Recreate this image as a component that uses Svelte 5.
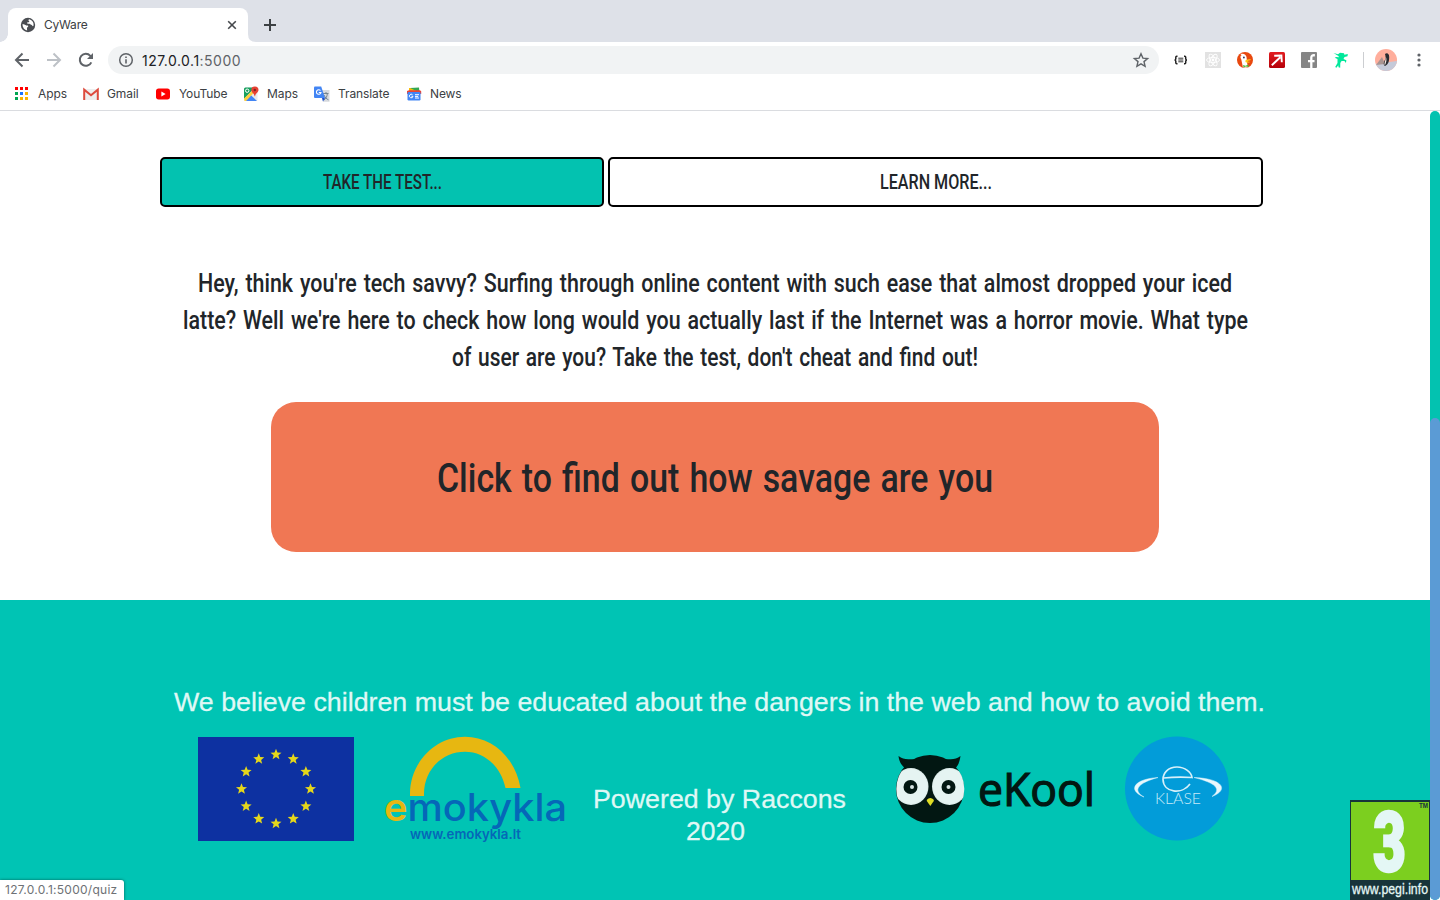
<script>
  const starAngles = Array.from({ length: 12 }, (_, i) => (i * Math.PI) / 6);
  const star = Array.from({ length: 10 }, (_, i) => {
    const r = i % 2 ? 2.5 : 5.8;
    const a = (i * Math.PI) / 5 - Math.PI / 2;
    return `${(r * Math.cos(a)).toFixed(2)},${(r * Math.sin(a)).toFixed(2)}`;
  }).join(' ');
  const appDots = ['#f00', '#f00', '#f00', '#00a651', '#1a73ff', '#fbb400', '#00a651', '#fbb400', '#fbb400'];
  const intro = [
    { t: "Hey, think you're tech savvy? Surfing through online content with such ease that almost dropped your iced", w: 1034 },
    { t: "latte? Well we're here to check how long would you actually last if the Internet was a horror movie. What type", w: 1065 },
    { t: "of user are you? Take the test, don't cheat and find out!", w: 526 }
  ];
</script>

{#snippet fitted(text, width, height, baseline, cls)}
  <svg class={cls} {width} {height}><text x="0" y={baseline} textLength={width} lengthAdjust="spacingAndGlyphs">{text}</text></svg>
{/snippet}

<div class="window">
  <div class="tabs">
    <div class="tab">
      <svg width="16" height="16" viewBox="0 0 16 16"><circle cx="8" cy="8" r="7.2" fill="#4a4d52"/><path d="M2.4 7.2c1.6-.2 2.9.4 3.8 1.4h1.6c.7.5.5 1.4-.3 1.6-.7.2-.6 1.5-.3 3.2C4.500 13 2.500 10.600 2.400 7.200zM9.300 2.300C8 3 8.200 3.600 9 3.900c.6.3.2 1.300-.8 1.300-.9 0-1.600.7-.8 1.300.7.5 1.900-.2 2.600.6.7.8 1.700.7 2.200 1.500.3.5.5.7 1.200.5C14.300 5.800 12.300 3.100 9.300 2.300z" fill="#fff"/></svg>
      <span>CyWare</span>
      <svg class="close" width="10" height="10" viewBox="0 0 10 10"><path d="M1.200 1.200l7.600 7.600M8.800 1.200L1.200 8.800" stroke="#45484c" stroke-width="1.600"/></svg>
    </div>
    <svg class="foot" width="8" height="8"><path d="M0 0Q0 8 8 8H0z" fill="#fff"/></svg>
    <svg class="plus" width="14" height="14"><path d="M7 1v12M1 7h12" stroke="#3c4043" stroke-width="2"/></svg>
  </div>

  <div class="toolbar">
    <div class="nav">
      <svg width="16" height="16"><path d="M15 8H2M8.500 1.500L2 8l6.500 6.500" stroke="#5f6368" stroke-width="2" fill="none"/></svg>
      <svg width="16" height="16"><path d="M1 8h13M7.500 1.500L14 8l-6.500 6.500" stroke="#bdc1c6" stroke-width="2" fill="none"/></svg>
      <svg width="16" height="16"><path d="M13.300 10.300A6 6 0 1 1 12.300 3.800L14 5.500" stroke="#5f6368" stroke-width="2" fill="none"/><path d="M15 1v6H9z" fill="#5f6368"/></svg>
    </div>
    <div class="address">
      <svg width="16" height="16"><circle cx="8" cy="8" r="6.300" stroke="#5f6368" stroke-width="1.500" fill="none"/><path d="M8 7.200v4.200M8 4.500v1.500" stroke="#5f6368" stroke-width="1.600"/></svg>
      <span class="url">127.0.0.1<i>:5000</i></span>
      <svg class="fav" width="16" height="16"><path d="M8 1.700l1.900 4.400 4.700.4-3.600 3.100 1.100 4.700L8 11.800l-4.100 2.500L5 9.600 1.400 6.500l4.700-.4z" stroke="#5f6368" stroke-width="1.400" fill="none"/></svg>
    </div>
    <div class="ext">
      <svg width="16" height="16"><path d="M4.500 4.200h-.8q-.9 0-.9 1v1.500q0 1.300-1.300 1.300 1.300 0 1.300 1.300v1.500q0 1 .9 1h.8M11 4.200h.8q.9 0 .9 1v1.500q0 1.300 1.300 1.300-1.300 0-1.300 1.300v1.500q0 1-.9 1H11" stroke="#222" stroke-width="1.500" fill="none"/><path d="M5.300 6.200h5M5.300 8h5M5.300 9.800h5" stroke="#333" stroke-width="1"/></svg>
      <svg width="16" height="16"><path d="M0 0h16v16H0z" fill="#e2e2e2"/><g fill="none" stroke="#fff" stroke-width=".9"><ellipse cx="8" cy="8" rx="6.500" ry="2.600"/><ellipse cx="8" cy="8" rx="6.500" ry="2.600" transform="rotate(60 8 8)"/><ellipse cx="8" cy="8" rx="6.500" ry="2.600" transform="rotate(120 8 8)"/></g><circle cx="8" cy="8" r="1.400" fill="#fff"/></svg>
      <svg width="16" height="16"><circle cx="8" cy="8" r="8" fill="#e8480f"/><path d="M3.500 2.200C6 1 9.400 2.500 9.600 5.600l.3 4.200 1 5.400c-2 .7-3.500.5-5 0L4.300 7.500C3 5 3.200 3.700 4.700 3.200z" fill="#fff"/><circle cx="6.900" cy="5.500" r=".9" fill="#335"/><path d="M8.500 8.200c2-.9 4.200-1 5.500-.7-.7 1.100-2.800 1.100-3.700 1.700.8.600 2.400.4 3 .8-1.300 1-3.600.9-4.900.1z" fill="#ffcc17"/><path d="M6 13l2.500.7 2.800-1.200.4 2.500-2.900-.4L6.500 15.500z" fill="#55bd36"/></svg>
      <svg width="16" height="16"><defs><linearGradient id="red" x2="0" y2="1"><stop stop-color="#e21d20"/><stop offset="1" stop-color="#b50008"/></linearGradient></defs><rect width="16" height="16" rx="1.500" fill="url(#red)"/><path d="M2.800 13.200l8.500-8M5.200 3.800l7.200-.3.4 6.800" fill="none" stroke="#fff" stroke-width="1.900"/></svg>
      <svg width="16" height="16"><rect width="16" height="16" rx="1" fill="#858585"/><path d="M10.300 16V9.700M7 9.100h6.500M10.300 10V5.800c0-2 1-2.800 3.600-2.500" stroke="#fff" stroke-width="2.300" fill="none"/></svg>
      <svg width="16" height="16"><path d="M.5 1l4.500 1.300L7 .8l4 .4.400 1.600 3.400-.7-.3 2.200-3 .7-1 2 2.900 1.300-.5 2.600-1.500-1.800-2.800-.2-1.300 2-.1 4.800-1.700-.4-.2-2-1.900 2.400-1.200-.8 2.300-4L4.500 7 1.700 5.800l1.500-.9 2.800.4L5.400 4z" fill="#00e89b"/></svg>
    </div>
    <div class="divider"></div>
    <svg class="avatar" width="22" height="22"><defs><clipPath id="face"><circle cx="11" cy="11" r="11"/></clipPath></defs><g clip-path="url(#face)"><path d="M0 0h22v22H0z" fill="#ffae9c"/><path d="M0 15l22-3v10H0z" fill="#c5cad9"/><path d="M1 16L7 8l3 7z" fill="#a99491"/><path d="M10 5c2-1.600 4.200-.4 4.200 3 0 4-.7 7.500-4.200 9-2-1-1.200-4 0-6.200.7-1.700.8-3.200 0-5.800z" fill="#292b31"/><path d="M10.700 8c1.500 2 .5 6.300-.9 8.200-1-2 .9-3.900.9-8.200z" fill="#f3e6df"/></g></svg>
    <svg class="menu" width="4" height="16"><circle cx="2" cy="3" r="1.600"/><circle cx="2" cy="8" r="1.600"/><circle cx="2" cy="13" r="1.600"/></svg>
  </div>

  <div class="bookmarks">
    <div style="width:68px"><svg width="16" height="16">{#each appDots as c, i}<rect x={1 + (i % 3) * 5} y={1 + Math.floor(i / 3) * 5} width="3" height="3" fill={c}/>{/each}</svg><span>Apps</span></div>
    <div style="width:71px"><svg width="16" height="16"><path d="M1 3h14v11H1z" fill="#eee"/><path d="M1.200 14V3.700L8 9.200l6.800-5.500V14" fill="none" stroke="#dd4b3e" stroke-width="2"/></svg><span>Gmail</span></div>
    <div style="width:87px"><svg width="16" height="16"><rect x="1" y="2.500" width="14" height="11" rx="2.700" fill="#f00"/><path d="M6.400 5.500v5L10.600 8z" fill="#fff"/></svg><span>YouTube</span></div>
    <div style="width:70px"><svg width="16" height="16"><rect x="1" y="1.500" width="13.500" height="13.500" rx="1.500" fill="#e8eaed"/><path d="M1 3q0-1.500 1.500-1.500H12L1 13z" fill="#18a05e"/><path d="M2.500 15L8 9.300l6 5.700z" fill="#4285f4"/><path d="M1 12.500L12.500 1.500l1.500 2L3 15H1.500z" fill="#ffcf3d"/><circle cx="4.200" cy="4.700" r="1.700" fill="none" stroke="#fff"/><path d="M11.800.5a3.500 3.500 0 0 0-3.500 3.600c0 2.400 2.900 3.300 3.300 6.100h.5c.4-2.800 3.400-3.700 3.400-6.100A3.600 3.600 0 0 0 11.800.5" fill="#e74133"/><circle cx="11.800" cy="4" r="1.200" fill="#7c251f"/></svg><span>Maps</span></div>
    <div style="width:91px"><svg width="16" height="16"><path d="M5 4h10.500v11.800H9z" fill="#d7dade"/><path d="M9 7.500h5.500M12 6v1.500M10 14c2-1.500 3.200-3.500 3.300-6.500M10 9c1 2.500 2.500 4 4.500 4.800" stroke="#758590" fill="none"/><path d="M1 .5h6.200L11 12H1q-1 0-1-1V1.500Q0 .5 1 .5z" fill="#4285f4"/><path d="M8 12h3l-2 3.500z" fill="#1b50ce"/><path d="M6.500 4.500A2.300 2.300 0 1 0 7 6.500H4.800" fill="none" stroke="#fff" stroke-width="1.100"/></svg><span>Translate</span></div>
    <div><svg width="16" height="16"><path d="M3 2h9v6H3z" fill="#fbbc04"/><path d="M4 2l9-.5.500 5z" fill="#34a853"/><path d="M1 5l2-.8h11l1.200 1V8H1z" fill="#ea4335"/><rect x="1.500" y="6" width="13" height="8.500" rx="1.200" fill="#4285f4"/><path d="M6.500 8.700A1.800 1.800 0 1 0 7 10.300H5.500M9 8.700h4M9 10.400h3.200M9 12h4" stroke="#fff" fill="none"/></svg><span>News</span></div>
  </div>

  <main>
    <div class="choices">
      <button class="test">{@render fitted('TAKE THE TEST...', 119, 24, 19, 'label')}</button>
      <button class="learn">{@render fitted('LEARN MORE...', 112, 24, 19, 'label')}</button>
    </div>
    <div class="intro">
      {#each intro as l}{@render fitted(l.t, l.w, 37, 27, 'copy')}{/each}
    </div>
    <button class="cta">{@render fitted('Click to find out how savage are you', 556, 60, 45, 'big')}</button>
  </main>

  <footer>
    {@render fitted('We believe children must be educated about the dangers in the web and how to avoid them.', 1091, 36, 26, 'belief')}
    <div class="partners">
      <svg width="156" height="108"><rect y="2" width="156" height="104" fill="#0d31a1"/>{#each starAngles as a}<polygon points={star} fill="#e5d71b" transform={`translate(${78 + 34.500 * Math.sin(a)} ${54 - 34.500 * Math.cos(a)})`}/>{/each}</svg>
      <svg class="emo" width="185" height="112"><path d="M26 61V59C26 28 50.600 1.700 81 1.700C108 1.700 131 22 136.500 53H121.500C117 32 101 16.700 81 16.700C58 16.700 40 35 40 59V61z" fill="#e7b711"/><text x="0" y="85.500" textLength="183" lengthAdjust="spacingAndGlyphs"><tspan fill="#e7b711" font-weight="600">e</tspan>mokykla</text><text class="site" x="26" y="103.500" textLength="111" lengthAdjust="spacingAndGlyphs">www.emokykla.lt</text></svg>
      <div class="powered">{@render fitted('Powered by Raccons', 253, 32, 25, 'belief')}{@render fitted('2020', 59, 32, 25, 'belief year')}</div>
      <svg class="ekool" width="202" height="108">
        <defs><clipPath id="head"><circle cx="36.300" cy="54" r="34"/></clipPath><radialGradient id="eye" cx=".5" cy=".5" r=".65"><stop offset=".7" stop-color="#e5f4f2"/><stop offset="1" stop-color="#acc0bd"/></radialGradient></defs>
        <path d="M4.500 21c6 5 13 2 20 4l22 0c7-2 14 1 20-4-1 6-2 9-5 12l-26 8L11 33C7 30 5 26 4.500 21z" fill="#021712"/>
        <circle cx="36" cy="54" r="34" fill="#021712"/>
        <g clip-path="url(#head)"><ellipse cx="17" cy="51.500" rx="17.500" ry="18.500" fill="url(#eye)"/><ellipse cx="55.500" cy="51.500" rx="17.500" ry="18.500" fill="url(#eye)"/></g>
        <g fill="#021712"><circle cx="16.500" cy="52" r="7"/><circle cx="54.500" cy="52" r="7"/></g><g fill="#d5e3e2"><circle cx="18" cy="52" r="2"/><circle cx="54.500" cy="52" r="2"/></g>
        <path d="M36.300 63q-4 1-3.500 3l3.500 5 3.500-5q.5-2-3.500-3z" fill="#dedd25"/>
        <text x="84" y="71" textLength="117" lengthAdjust="spacingAndGlyphs">eKool</text>
      </svg>
      <svg class="klase" width="104" height="108"><circle cx="52" cy="53.500" r="52" fill="#029cd9"/><path d="M38.500 43q14-1.500 28.500-.5c-.5-5-7-10.500-15-10.500-9 0-14 6-14 12.500C38.500 58 57 60 65 49" fill="none" stroke="#d7f0fa" stroke-width="1.700"/><path d="M33 42.500C9 44 2 55 19 62 7 55 13 48 33 42.500zM69 42.500c28 1 36 12 18 19C97 54 91 48 69 42.500z" fill="#e9f7fc" stroke="#d7f0fa" stroke-width=".5"/><text x="30" y="69" textLength="46" lengthAdjust="spacingAndGlyphs">KLASE</text></svg>
    </div>
  </footer>

  <div class="scroll"><div></div></div>
  <div class="status"><span>127.0.0.1:5000/quiz</span></div>
  <svg class="pegi" width="80" height="100"><path d="M0 0h80v100H0z" fill="#17343a"/><path d="M1 2h78v78H1z" fill="#7ccf1f"/><text class="three" x="23" y="70.500" textLength="33" lengthAdjust="spacingAndGlyphs">3</text><text x="69" y="8" class="tm" textLength="9" lengthAdjust="spacingAndGlyphs">TM</text><text class="info" x="2" y="94" textLength="76" lengthAdjust="spacingAndGlyphs">www.pegi.info</text></svg>
</div>

<style>
  :global(body) { margin: 0; overflow: hidden; }
  .window { position: relative; width: 1440px; height: 900px; overflow: hidden; background: #fff; font-family: Inter, sans-serif; color: #3c4043; }
  svg { display: block; flex: none; overflow: visible; }
  button { display: flex; align-items: center; justify-content: center; padding: 0; box-sizing: border-box; }
  .tabs { height: 42px; background: #dee1e8; display: flex; align-items: flex-end; padding-left: 8px; }
  .tabs::before { content: ''; width: 8px; height: 8px; margin-left: -8px; background: radial-gradient(circle at 0 0, transparent 7.5px, #fff 8px); }
  .tab { box-sizing: border-box; width: 240px; height: 34px; background: #fff; border-radius: 8px 8px 0 0; padding: 0 11px 0 12px; display: flex; align-items: center; gap: 8px; font-size: 12px; letter-spacing: -.2px; }
  .tab span { padding-bottom: 1px; }
  .close { margin-left: auto; }
  .plus { margin: 0 0 10px 7px; }
  .toolbar { height: 36px; display: flex; align-items: center; }
  .nav { display: flex; gap: 16px; padding-left: 14px; width: 94px; }
  .address { box-sizing: border-box; width: 1051px; height: 28px; border-radius: 14px; background: #f1f3f4; display: flex; align-items: center; padding: 0 10px; }
  .url { margin-left: 8px; font-size: 14px; color: #202124; letter-spacing: .48px; }
  .url i { font-style: normal; color: #5f6368; }
  .fav { margin-left: auto; }
  .ext { display: flex; gap: 16px; margin-left: 14px; }
  .divider { width: 1px; height: 16px; background: #ccced1; margin-left: 14px; }
  .avatar { margin-left: 11px; }
  .menu { margin-left: 19.5px; fill: #5f6368; }
  .bookmarks { box-sizing: border-box; height: 33px; border-bottom: 1px solid #dadce0; display: flex; padding: 0 0 1px 14px; font-size: 12px; letter-spacing: -.1px; }
  .bookmarks > div { display: flex; align-items: center; gap: 8px; margin-left: 1px; }
  .bookmarks > div:first-child { margin-left: 0; }
  main { width: 1430px; height: 489px; display: flex; flex-direction: column; align-items: center; }
  .choices { align-self: flex-start; display: flex; gap: 4px; margin: 46px 0 0 160px; }
  .choices button { height: 50px; border: 2px solid #000; border-radius: 5px; background: #fff; }
  .choices .test { width: 444px; background: #03c2b0; }
  .choices .learn { width: 655px; }
  .label, .copy, .big { font-family: Roboto, sans-serif; font-weight: 500; fill: #212529; }
  .label { font-size: 20px; }
  .copy { font-size: 25px; word-spacing: 1.8px; }
  .big { font-size: 40px; word-spacing: 2px; }
  .intro { margin-top: 58px; display: flex; flex-direction: column; align-items: center; }
  .cta { width: 888px; height: 150px; margin-top: 26px; border: 0; border-radius: 25px; background: #f07754; }
  footer { box-sizing: border-box; width: 1430px; height: 300px; padding: 85px 0 0 174px; background: #00c4b4; }
  .belief { font: 26.700px "Liberation Sans", sans-serif; fill: #dff8f5; stroke: #dff8f5; stroke-width: .3px; }
  .year { margin-left: -8px; }
  .partners { display: flex; align-items: flex-start; padding: 14px 0 0 24px; }
  .emo { margin-left: 30px; font: 500 38px Inter, sans-serif; fill: #0567b8; }
  .site { font-size: 13px; font-weight: 600; }
  .powered { width: 253px; margin: 48px 0 0 24px; display: flex; flex-direction: column; align-items: center; }
  .ekool { margin-left: 48px; font: 400 45px "Open Sans", sans-serif; fill: #021712; }
  .ekool text { stroke: #021712; stroke-width: 1.2px; }
  .klase { margin-left: 29px; font: 300 16px Lato, sans-serif; fill: #c8eaf8; }
  .scroll { position: absolute; right: 0; top: 111px; width: 10px; height: 789px; border-radius: 5px; background: #03c2b0; }
  .scroll div { height: 482px; margin-top: 307px; border-radius: 5px; background: #5b9bd5; }
  .status { position: absolute; left: 0; bottom: 0; box-sizing: border-box; width: 124px; height: 20px; padding: 3px 0 0 5px; border-radius: 0 3px 0 0; background: #fff; font-size: 12px; line-height: 14px; letter-spacing: .27px; white-space: nowrap; color: #6e7175; box-shadow: 0 0 3px #0008; }
  .pegi { position: absolute; left: 1350px; top: 800px; fill: #e4f7f5; }
  .three { font: 900 83px Roboto, sans-serif; stroke: #e4f7f5; stroke-width: 2.5; }
  .tm { font: 700 7px "Liberation Sans", sans-serif; fill: #17343a; }
  .info { font: 15px "Liberation Sans", sans-serif; stroke: #e4f7f5; stroke-width: .3; }
</style>
